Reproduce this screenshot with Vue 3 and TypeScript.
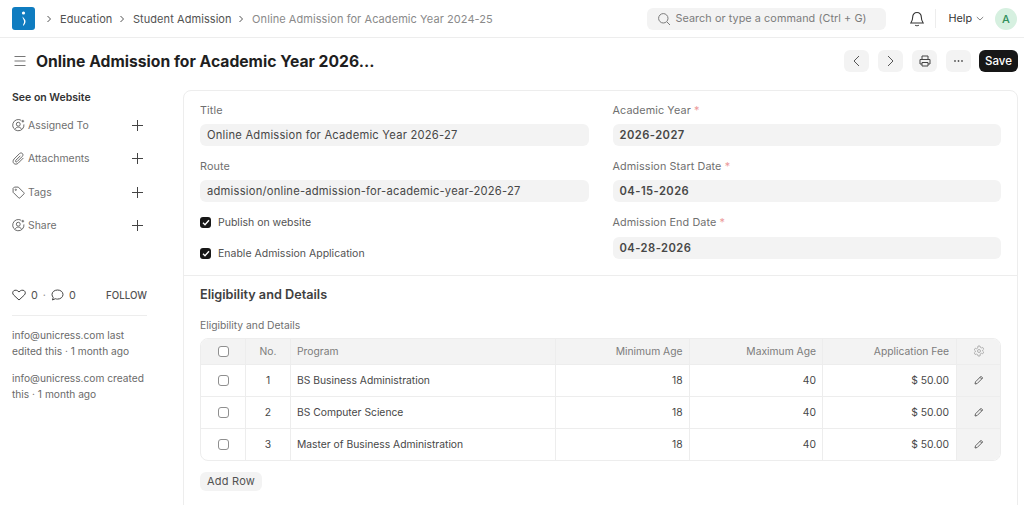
<template>
  <div class="page">
    <header class="navbar">
      <svg class="logo" width="23" height="23" viewBox="0 0 23 23">
        <rect width="23" height="23" rx="3" fill="#0f7cc0" />
        <circle cx="11.5" cy="6" r="1.600" fill="#fff" />
        <path d="M10.800 9.500c-.8 2 1.900 3.500 1.200 6-.4 1.300-1.200 2-.9 3.500 1.200-1 2.600-2.800 2.400-5-.2-1.800-2-2.800-2.700-4.500z" fill="#fff" />
      </svg>
      <nav class="crumbs">
        <template v-for="(c, i) in crumbs" :key="c">
          <svg class="crumb-sep" width="6" height="8" viewBox="0 0 6 8"><path d="M1.500 1l3 3-3 3" fill="none" stroke="#525252" /></svg>
          <span :class="i === crumbs.length - 1 ? 'crumb-last' : 'crumb'">{{ c }}</span>
        </template>
      </nav>
      <div class="search">
        <svg width="14" height="14" viewBox="0 0 14 14" fill="none" stroke="#7c7c7c"><circle cx="6.300" cy="6.300" r="4.700" /><path d="M10 10l3 3" /></svg>
        <span>Search or type a command (Ctrl + G)</span>
      </div>
      <svg class="bell" width="14" height="16" viewBox="0 0 14 16" fill="none" stroke="#333" stroke-width="1.100">
        <path d="M7 1.500c-2.700 0-4.300 2-4.300 4.500 0 3-.9 4.700-1.900 6h12.400c-1-1.300-1.900-3-1.900-6 0-2.500-1.600-4.500-4.300-4.500z" />
        <path d="M5.300 14.200c.8.800 2.600.8 3.400 0" />
      </svg>
      <div class="nav-divider"></div>
      <span class="help">Help</span>
      <svg class="help-caret" width="8" height="5" viewBox="0 0 8 5"><path d="M.8 1l3.200 3 3.200-3" fill="none" stroke="#777" stroke-width=".9" /></svg>
      <div class="avatar">A</div>
    </header>

    <div class="page-head">
      <div class="head-left">
        <svg width="12" height="12" viewBox="0 0 12 12" stroke="#777"><path d="M.5 1.500h11M.5 6h11M.5 10.500h11" /></svg>
        <h1>Online Admission for Academic Year 2026...</h1>
      </div>
      <div class="head-actions">
        <button class="icon-btn gap-lg"><svg width="7" height="12" viewBox="0 0 7 12"><path d="M6 1L1 6l5 5" fill="none" stroke="#555" /></svg></button>
        <button class="icon-btn gap-lg"><svg width="7" height="12" viewBox="0 0 7 12"><path d="M1 1l5 5-5 5" fill="none" stroke="#555" /></svg></button>
        <button class="icon-btn gap-lg">
          <svg width="12" height="12" viewBox="0 0 12 12" fill="none" stroke="#444"><path d="M3 4V1h6v3M3 9H1V4.500h10V9H9" /><path d="M3 7.500h6v3.500H3z" /></svg>
        </button>
        <button class="icon-btn">
          <svg width="9" height="2" viewBox="0 0 9 2" fill="#555"><circle cx="1" cy="1" r=".9" /><circle cx="4.500" cy="1" r=".9" /><circle cx="8" cy="1" r=".9" /></svg>
        </button>
        <button class="save">Save</button>
      </div>
    </div>

    <div class="body">
      <aside class="sidebar">
        <div class="see-website">See on Website</div>
        <div v-for="item in sideItems" :key="item.label" class="side-row">
          <div class="side-label">
            <svg v-if="item.icon === 'user'" width="13" height="13" viewBox="0 0 12 12" fill="none" stroke="#666" stroke-width=".9">
              <path d="M8.500 1.200A5.200 5.200 0 1 0 11 5" />
              <circle cx="5.800" cy="4.800" r="1.800" />
              <path d="M2.800 9.500c.7-1.500 1.800-2 3-2s2.300.5 3 2" />
              <path d="M10 .8v2.400M8.800 2h2.400" />
            </svg>
            <svg v-else-if="item.icon === 'clip'" width="13" height="13" viewBox="0 0 12 12" fill="none" stroke="#666" stroke-width=".9">
              <path d="M10.500 5.500l-4.800 4.800c-1.200 1.200-3 1.200-4 .2s-1-2.800.2-4l5-5c.8-.8 2-.8 2.700-.1s.7 1.900-.1 2.700L4.700 8.900c-.4.4-1 .4-1.300.1s-.3-.9.1-1.300l4.200-4.200" />
            </svg>
            <svg v-else width="13" height="13" viewBox="0 0 12 12" fill="none" stroke="#666" stroke-width=".9">
              <path d="M1 2.200L2.200 1h3.600l5.200 5.200a.8.800 0 0 1 0 1.100L7.300 11a.8.800 0 0 1-1.100 0L1 5.800z" />
              <circle cx="3.500" cy="3.500" r=".6" />
            </svg>
            <span>{{ item.label }}</span>
          </div>
          <svg width="11" height="11" viewBox="0 0 11 11" stroke="#444"><path d="M5.500 0v11M0 5.500h11" /></svg>
        </div>
        <div class="stats">
          <svg width="14" height="12" viewBox="0 0 14 12" fill="none" stroke="#444"><path d="M7 11L1.800 6.200C.2 4.700.5 2.800 1.700 1.800c1.400-1.100 3.700-.8 5.300 1.200 1.600-2 3.900-2.300 5.300-1.200 1.200 1 1.500 2.900-.1 4.400z" /></svg>
          <span class="count">0</span>
          <span class="dot">·</span>
          <svg width="13" height="12" viewBox="0 0 13 12" fill="none" stroke="#444"><path d="M6.500 1C3.400 1 1 3 1 5.500c0 1.100.5 2.100 1.200 2.900L1.500 11l2.800-1.300c.7.300 1.400.4 2.200.4 3.100 0 5.500-2 5.500-4.600S9.600 1 6.500 1z" /></svg>
          <span class="count">0</span>
          <span class="follow">FOLLOW</span>
        </div>
        <div class="side-meta">
          <p>info@unicress.com last<br />edited this · 1 month ago</p>
          <p>info@unicress.com created<br />this · 1 month ago</p>
        </div>
      </aside>

      <main class="card">
        <section class="form-grid">
          <div class="col">
            <div class="field">
              <label>Title</label>
              <div class="control">Online Admission for Academic Year 2026-27</div>
            </div>
            <div class="field">
              <label>Route</label>
              <div class="control">admission/online-admission-for-academic-year-2026-27</div>
            </div>
            <div class="check first"><span class="check-box"><svg width="8" height="7" viewBox="0 0 8 7"><path d="M1 3.700l2 2 4-4.500" fill="none" stroke="#fff" stroke-width="1.400" /></svg></span>Publish on website</div>
            <div class="check"><span class="check-box"><svg width="8" height="7" viewBox="0 0 8 7"><path d="M1 3.700l2 2 4-4.500" fill="none" stroke="#fff" stroke-width="1.400" /></svg></span>Enable Admission Application</div>
          </div>
          <div class="col">
            <div v-for="f in rightFields" :key="f.label" class="field">
              <label>{{ f.label }} <span class="req">*</span></label>
              <div class="control strong">{{ f.value }}</div>
            </div>
          </div>
        </section>

        <section class="details">
          <h2>Eligibility and Details</h2>
          <div class="table-label">Eligibility and Details</div>
          <div class="table">
            <div class="tr thead">
              <div class="td c-check"><span class="box"></span></div>
              <div class="td c-no">No.</div>
              <div class="td c-prog">Program</div>
              <div class="td c-num">Minimum Age</div>
              <div class="td c-num">Maximum Age</div>
              <div class="td c-fee">Application Fee</div>
              <div class="td c-act">
                <svg width="12" height="12" viewBox="0 0 12 12" fill="none" stroke="#aaa" stroke-width=".9">
                  <path d="M5 1h2l.3 1.300 1.200.6 1.200-.5 1 1.700-1 .9v1.200l1 .9-1 1.700-1.200-.5-1.200.6L7 11H5l-.3-1.300-1.200-.6-1.200.5-1-1.700 1-.9V5.800l-1-.9 1-1.700 1.200.5 1.200-.6z" />
                  <circle cx="6" cy="6" r="1.500" />
                </svg>
              </div>
            </div>
            <div v-for="(r, i) in rows" :key="r" class="tr">
              <div class="td c-check"><span class="box"></span></div>
              <div class="td c-no center">{{ i + 1 }}</div>
              <div class="td c-prog">{{ r }}</div>
              <div class="td c-num">18</div>
              <div class="td c-num">40</div>
              <div class="td c-fee">$ 50.00</div>
              <div class="td c-act shade">
                <svg width="10" height="10" viewBox="0 0 10 10" fill="none" stroke="#555" stroke-width=".9">
                  <path d="M1 9l.5-2.200L7 1.300 8.700 3 3.200 8.500z" />
                  <path d="M6 2.300L7.700 4" />
                </svg>
              </div>
            </div>
          </div>
          <button class="add-row">Add Row</button>
        </section>
      </main>
    </div>
  </div>
</template>

<script setup lang="ts">
const crumbs = ['Education', 'Student Admission', 'Online Admission for Academic Year 2024-25']

const sideItems = [
  { label: 'Assigned To', icon: 'user' },
  { label: 'Attachments', icon: 'clip' },
  { label: 'Tags', icon: 'tag' },
  { label: 'Share', icon: 'user' },
]

const rightFields = [
  { label: 'Academic Year', value: '2026-2027' },
  { label: 'Admission Start Date', value: '04-15-2026' },
  { label: 'Admission End Date', value: '04-28-2026' },
]

const rows = ['BS Business Administration', 'BS Computer Science', 'Master of Business Administration']
</script>

<style>
html,
body {
  margin: 0;
  background: #fff;
}
</style>

<style scoped>
.page {
  width: 1024px;
  height: 505px;
  overflow: hidden;
  font-family: Inter, 'Liberation Sans', sans-serif;
  color: #383838;
  font-size: 11px;
}

.navbar {
  height: 37px;
  border-bottom: 1px solid #ededed;
  display: flex;
  align-items: center;
  padding: 0 7px 0 12px;
}

.logo {
  flex: none;
}

.crumbs {
  display: flex;
  align-items: center;
  margin-left: 11px;
  flex: 1;
  font-size: 11px;
  letter-spacing: .07px;
}

.crumb-sep {
  margin-right: 8px;
}

.crumb {
  margin-right: 6.500px;
  color: #525252;
}

.crumb-last {
  color: #8a8a8a;
}

.search {
  width: 239px;
  height: 22px;
  border-radius: 6px;
  background: #f3f3f3;
  display: flex;
  align-items: center;
  gap: 4px;
  padding-left: 10px;
  box-sizing: border-box;
  color: #7c7c7c;
  font-size: 10.800px;
  letter-spacing: .08px;
}

.bell {
  margin-left: 24px;
}

.nav-divider {
  width: 1px;
  height: 19px;
  background: #ededed;
  margin-left: 11px;
}

.help {
  margin-left: 12px;
  color: #333;
  font-size: 10.800px;
}

.help-caret {
  margin-left: 4px;
}

.avatar {
  width: 22px;
  height: 22px;
  border-radius: 50%;
  margin-left: 11px;
  background: #d6f0e0;
  color: #2f8f5b;
  font-size: 11px;
  font-weight: 500;
  display: flex;
  align-items: center;
  justify-content: center;
}

.page-head {
  height: 46px;
  margin-bottom: 6px;
  display: flex;
  align-items: center;
  justify-content: space-between;
  padding: 0 6px 0 14px;
}

.head-left {
  display: flex;
  align-items: center;
  gap: 10px;
}

h1 {
  margin: 0;
  font-size: 15.700px;
  font-weight: 700;
  color: #1f1f1f;
}

.head-actions {
  display: flex;
  align-items: center;
  gap: 8px;
}

.icon-btn {
  width: 25px;
  height: 22px;
  padding: 0;
  border: 0;
  border-radius: 6px;
  background: #f3f3f3;
  display: flex;
  align-items: center;
  justify-content: center;
}

.gap-lg {
  margin-right: 1px;
}

.save {
  width: 39px;
  height: 22px;
  padding: 0;
  border: 0;
  border-radius: 6px;
  background: #171717;
  color: #fff;
  font-family: inherit;
  font-size: 11.500px;
  font-weight: 500;
}

.body {
  display: flex;
  padding-left: 12px;
}

.sidebar {
  width: 135px;
  flex: none;
  margin-right: 36px;
}

.see-website {
  font-size: 10.500px;
  font-weight: 600;
  color: #333;
  margin-top: 1px;
  margin-bottom: 4px;
  height: 14px;
  line-height: 14px;
}

.side-row {
  height: 33.300px;
  display: flex;
  align-items: center;
  justify-content: space-between;
  padding-right: 4px;
  color: #6f6f6f;
  font-size: 10.400px;
}

.side-label {
  display: flex;
  align-items: center;
  gap: 3px;
}

.stats {
  display: flex;
  align-items: center;
  margin-top: 41px;
  height: 24px;
  padding-bottom: 8px;
  border-bottom: 1px solid #ededed;
  color: #525252;
  font-size: 10.800px;
}

.count {
  margin-left: 5px;
}

.dot {
  margin: 0 5px;
  color: #999;
}

.follow {
  margin-left: auto;
  font-size: 9.700px;
  font-weight: 500;
  color: #525252;
}

.side-meta {
  color: #6a6a6a;
  font-size: 10.200px;
  line-height: 15.500px;
  white-space: nowrap;
}

.side-meta p {
  margin: 12px 0 0;
}

.card {
  width: 835px;
  height: 430px;
  flex: none;
  box-sizing: border-box;
  border: 1px solid #ededed;
  border-radius: 8px;
}

.form-grid {
  display: grid;
  grid-template-columns: 1fr 1fr;
  column-gap: 24px;
  padding: 13px 16px 0;
  height: 171px;
  border-bottom: 1px solid #ededed;
}

.field {
  height: 56px;
}

.field label {
  display: block;
  height: 20px;
  line-height: 14px;
  color: #6f6f6f;
  font-size: 10.800px;
  letter-spacing: .1px;
}

.col:last-child .field:last-child label {
  height: 21px;
}

.req {
  color: #ec9a9a;
}

.control {
  height: 22px;
  line-height: 22px;
  border-radius: 6px;
  background: #f3f3f3;
  padding: 0 7px;
  color: #474747;
  font-size: 11.200px;
  letter-spacing: .22px;
}

.strong {
  font-weight: 600;
  letter-spacing: .45px;
}

.check {
  display: flex;
  align-items: center;
  gap: 7px;
  height: 16px;
  color: #525252;
  font-size: 10.500px;
  margin-top: 15px;
}

.check.first {
  margin-top: -2px;
}

.check-box {
  width: 11px;
  height: 11px;
  border-radius: 3px;
  background: #171717;
  display: flex;
  align-items: center;
  justify-content: center;
}

.details {
  padding: 11px 16px 0;
}

h2 {
  margin: 0;
  font-size: 12.700px;
  font-weight: 600;
  color: #404040;
  line-height: 15px;
}

.table-label {
  margin-top: 17px;
  color: #6f6f6f;
  font-size: 10.300px;
  line-height: 13px;
}

.table {
  margin-top: 6px;
  box-sizing: border-box;
  width: 801px;
  border: 1px solid #ededed;
  border-radius: 8px;
  overflow: hidden;
}

.tr {
  display: flex;
  height: 32px;
  border-top: 1px solid #ededed;
  box-sizing: border-box;
  color: #474747;
  font-size: 10.300px;
}

.thead {
  height: 25px;
  border-top: 0;
  background: #f3f3f3;
  color: #7c7c7c;
}

.td {
  display: flex;
  align-items: center;
  border-right: 1px solid #ededed;
  box-sizing: border-box;
  padding: 0 6px 1px;
}

.c-check {
  width: 45px;
  justify-content: center;
  padding: 0;
}

.c-no {
  width: 45px;
  justify-content: center;
}

.c-prog {
  width: 265px;
}

.c-num {
  width: 133.500px;
  justify-content: flex-end;
}

.c-fee {
  width: 133px;
  justify-content: flex-end;
  border-right: 0;
  padding-right: 7px;
}

.c-act {
  flex: 1;
  justify-content: center;
  border-right: 0;
  border-left: 1px solid #ededed;
}

.shade {
  background: #f3f3f3;
}

.box {
  width: 11px;
  height: 11px;
  box-sizing: border-box;
  border: 1px solid #8f8f8f;
  border-radius: 3px;
  background: #fff;
}

.add-row {
  display: block;
  margin-top: 11px;
  width: 62px;
  height: 19px;
  padding: 0 0 1px;
  border: 0;
  border-radius: 6px;
  background: #f3f3f3;
  color: #525252;
  font-family: inherit;
  font-size: 11px;
  letter-spacing: .2px;
}
</style>
